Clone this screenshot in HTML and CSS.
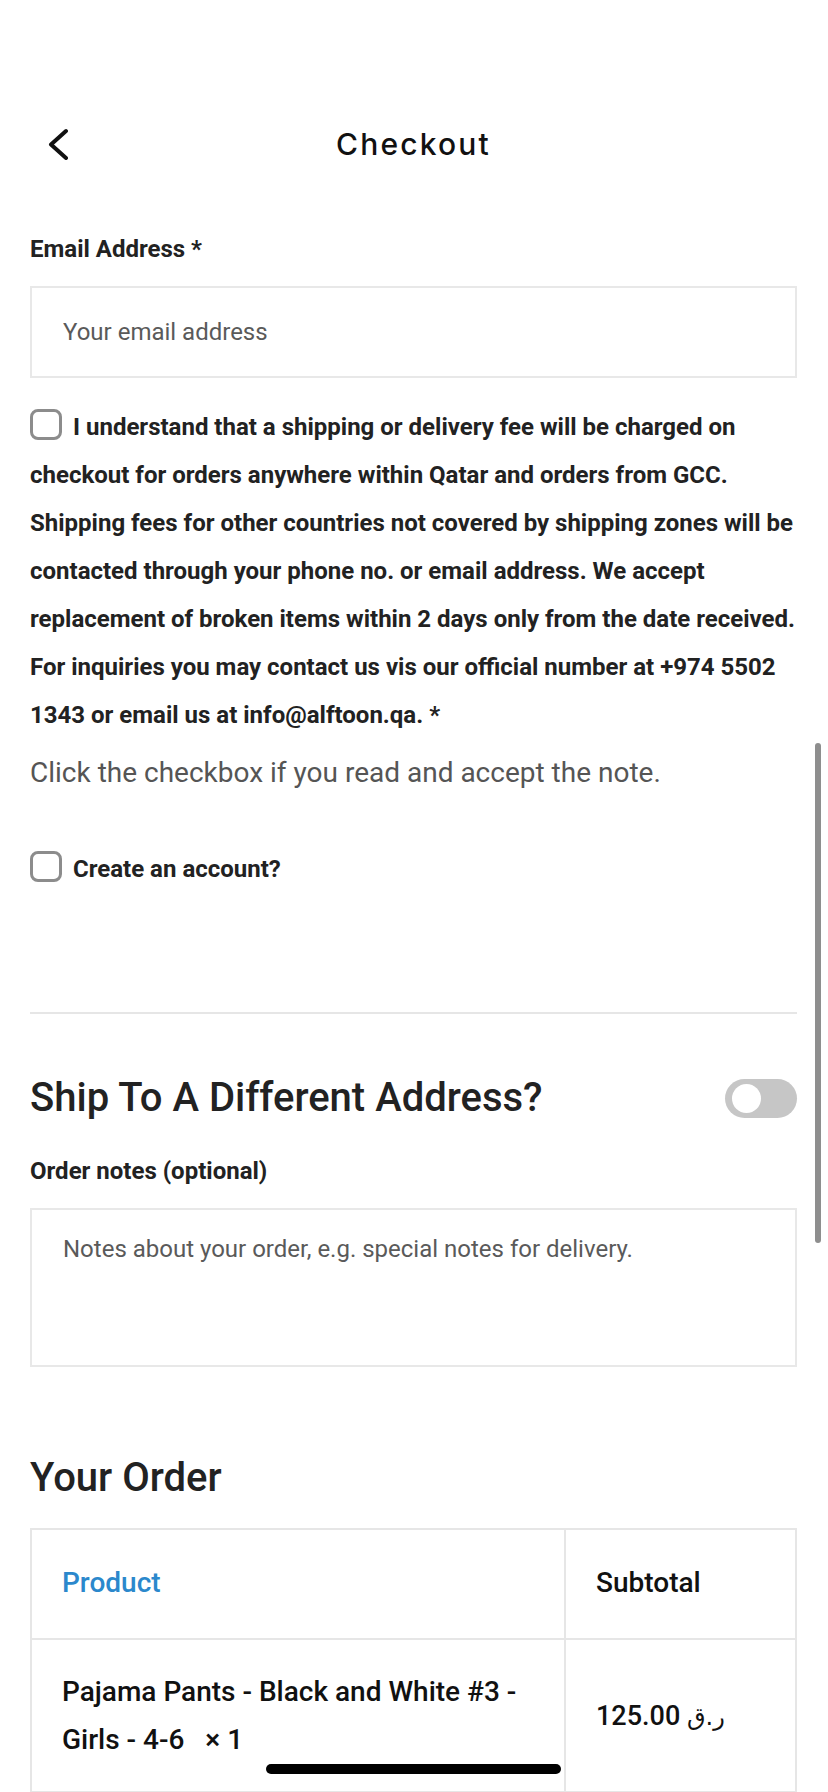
FILE: index.html
```html
<!DOCTYPE html>
<html lang="en">
<head>
<meta charset="utf-8">
<title>Checkout</title>
<link rel="stylesheet" href="styles.css">
</head>
<body>
<div class="page">
  <header class="topbar">
    <button class="back" aria-label="Back">
      <svg width="20" height="32" viewBox="0 0 20 32"><path d="M18 3 L3 16.5 L18 30" fill="none" stroke="#111" stroke-width="4" stroke-linecap="round" stroke-linejoin="round"/></svg>
    </button>
    <h1 class="title">Checkout</h1>
    <span></span>
  </header>

  <label class="field-label" for="email">Email Address *</label>
  <input id="email" class="input" type="email" placeholder="Your email address">

  <p class="note"><input type="checkbox" class="check">I understand that a shipping or delivery fee will be charged on checkout for orders anywhere within Qatar and orders from GCC. Shipping fees for other countries not covered by shipping zones will be contacted through your phone no. or email address. We accept replacement of broken items within 2 days only from the date received. For inquiries you may contact us vis our official number at +974 5502 1343 or email us at info@alftoon.qa. *</p>
  <p class="hint">Click the checkbox if you read and accept the note.</p>

  <p class="account"><input type="checkbox" class="check">Create an account?</p>

  <hr class="divider">

  <div class="ship-row">
    <h2 class="heading">Ship To A Different Address?</h2>
    <span class="toggle"><span class="knob"></span></span>
  </div>

  <label class="field-label notes-label" for="notes">Order notes (optional)</label>
  <textarea id="notes" class="notes" placeholder="Notes about your order, e.g. special notes for delivery."></textarea>

  <h2 class="heading order-title">Your Order</h2>
  <table class="order">
    <colgroup><col class="col-product"><col></colgroup>
    <thead>
      <tr><th class="th-product">Product</th><th>Subtotal</th></tr>
    </thead>
    <tbody>
      <tr><td>Pajama Pants - Black and White #3 - Girls - 4-6&nbsp;&nbsp;&nbsp;×&nbsp;1</td><td class="price">125.00&nbsp;<span>ر.ق</span></td></tr>
    </tbody>
  </table>
</div>
<div class="scrollbar"></div>
<div class="home-indicator"></div>
</body>
</html>
```

FILE: styles.css
```css
html, body {
  margin: 0;
  padding: 0;
}
body {
  width: 828px;
  height: 1792px;
  overflow: hidden;
  position: relative;
  background: #ffffff;
  color: #222222;
  font-family: Roboto, "Liberation Sans", "DejaVu Sans", sans-serif;
}
.page {
  padding: 0 31px 0 30px;
}
.topbar {
  margin-top: 100px;
  height: 88px;
  display: grid;
  grid-template-columns: 1fr auto 1fr;
  align-items: center;
}
.back {
  justify-self: start;
  margin-left: 18px;
  width: 20px;
  height: 32px;
  padding: 0;
  border: 0;
  background: none;
  display: flex;
}
.title {
  margin: 0;
  font-family: Inter, "Open Sans", sans-serif;
  font-weight: 500;
  font-size: 30px;
  line-height: 1;
  letter-spacing: 2.2px;
  color: #111111;
}
.field-label {
  display: block;
  margin-top: 46px;
  font-weight: 700;
  font-size: 24px;
  line-height: 30px;
  color: #222222;
}
.input {
  display: block;
  width: 100%;
  box-sizing: border-box;
  margin: 22px 0 0;
  height: 92px;
  border: 2px solid #e8e8e8;
  border-radius: 0;
  padding: 0 0 0 31px;
  font-family: Roboto, sans-serif;
  font-size: 24px;
  color: #222;
  outline: none;
}
.input::placeholder,
.notes::placeholder {
  color: #5a5a5a;
  opacity: 1;
}
.note {
  margin: 25px 0 0;
  font-weight: 700;
  font-size: 24px;
  line-height: 48px;
  color: #222222;
}
.check {
  -webkit-appearance: none;
  appearance: none;
  display: inline-block;
  width: 32px;
  height: 31px;
  box-sizing: border-box;
  margin: 0 11px 0 0;
  border: 3px solid #8c8c8c;
  border-radius: 8px;
  background: #fff;
  vertical-align: -5px;
}
.hint {
  margin: 14px 0 0;
  font-size: 28px;
  line-height: 40px;
  color: #555555;
}
.account {
  margin: 52px 0 0;
  font-weight: 700;
  font-size: 24px;
  line-height: 48px;
}
.divider {
  margin: 119px 0 0;
  height: 2px;
  border: 0;
  background: #e6e6e6;
}
.ship-row {
  margin-top: 58px;
  display: flex;
  align-items: center;
  justify-content: space-between;
}
.heading {
  margin: 0;
  font-weight: 500;
  font-size: 40px;
  line-height: 52px;
  color: #222222;
}
.toggle {
  width: 72px;
  height: 39px;
  box-sizing: border-box;
  border-radius: 20px;
  background: #c6c6c6;
  display: flex;
  align-items: center;
  padding-left: 7px;
}
.knob {
  width: 29px;
  height: 29px;
  border-radius: 50%;
  background: #ffffff;
}
.notes-label {
  margin-top: 32px;
}
.notes {
  display: block;
  width: 100%;
  box-sizing: border-box;
  margin: 22px 0 0;
  height: 159px;
  border: 2px solid #e8e8e8;
  border-radius: 0;
  padding: 21px 31px;
  font-family: Roboto, sans-serif;
  font-size: 24px;
  line-height: 36px;
  resize: none;
  outline: none;
}
.order-title {
  margin-top: 85px;
}
.order {
  margin-top: 24px;
  width: 100%;
  border-collapse: collapse;
  font-size: 28px;
  font-weight: 500;
  line-height: 48px;
  color: #111;
}
.col-product {
  width: 534px;
}
.order th,
.order td {
  border: 2px solid #e6e6e6;
  text-align: left;
  padding: 29px 30px 31px;
  font-weight: 500;
}
.order td {
  padding-top: 28px;
  padding-bottom: 27px;
}
.th-product {
  color: #2b88cc;
}
.price {
  vertical-align: middle;
  font-weight: 400;
  font-size: 27px;
}
.price span {
  font-family: "DejaVu Sans", sans-serif;
  font-size: 24px;
}
.scrollbar {
  position: absolute;
  left: 815px;
  top: 743px;
  width: 6px;
  height: 500px;
  border-radius: 3px;
  background: #8e8e8e;
}
.home-indicator {
  position: absolute;
  left: 266px;
  top: 1764px;
  width: 295px;
  height: 10px;
  border-radius: 5px;
  background: #000;
}
```
